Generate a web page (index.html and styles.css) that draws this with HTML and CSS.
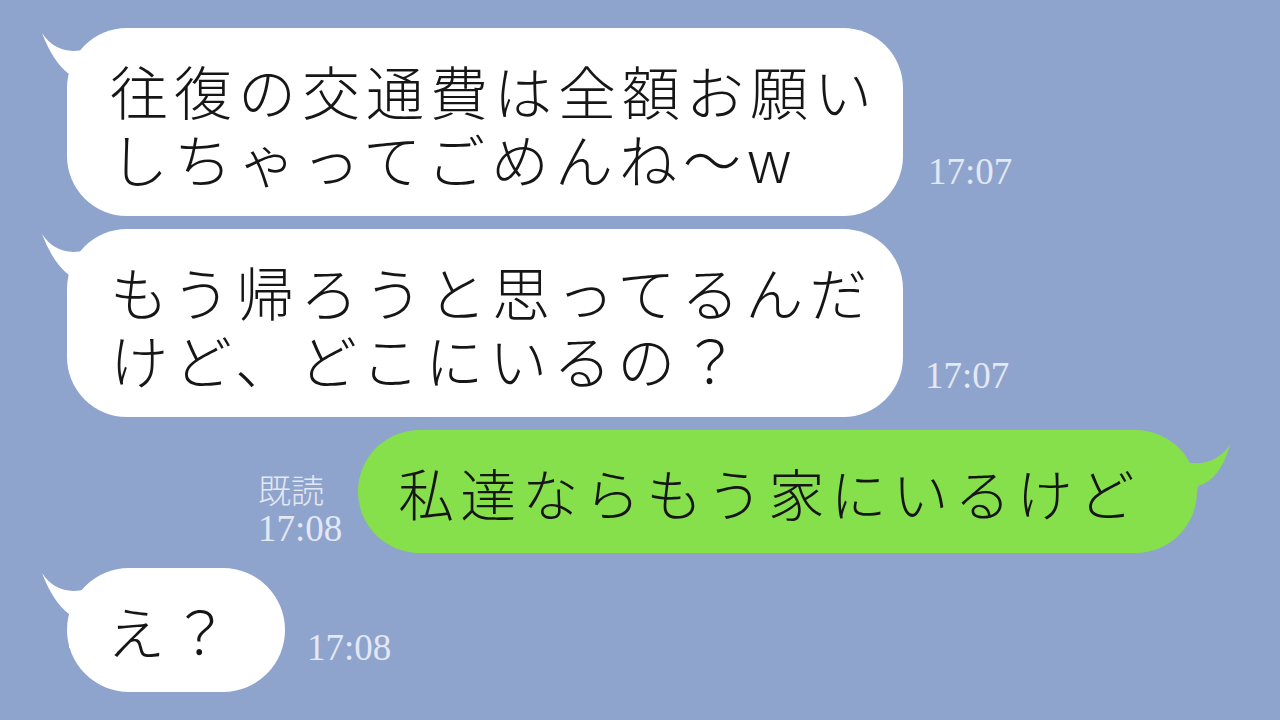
FILE: index.html
```html
<!DOCTYPE html>
<html lang="ja">
<head>
    <meta charset="UTF-8">
    <meta name="viewport" content="width=device-width, initial-scale=1.0">
    <title>トーク</title>
    <link rel="stylesheet" href="styles.css">
</head>
<body>
    <div class="chat">
        <!-- 相手のメッセージ -->
        <div class="row">
            <div class="bubble bubble-in bubble-big">
                <svg class="tail tail-in" width="70" height="80" viewBox="0 0 70 80"><path d="M3,5 Q22,34 62,16 L62,80 L30,80 L30,46 Q14,34 3,5 Z"/></svg>
                <p>往復の交通費は全額お願い<br>しちゃってごめんね～w</p>
            </div>
            <span class="time t1">17:07</span>
        </div>

        <div class="row">
            <div class="bubble bubble-in bubble-big">
                <svg class="tail tail-in" width="70" height="80" viewBox="0 0 70 80"><path d="M3,5 Q22,34 62,16 L62,80 L30,80 L30,46 Q14,34 3,5 Z"/></svg>
                <p>もう帰ろうと思ってるんだ<br>けど、どこにいるの？</p>
            </div>
            <span class="time t2">17:07</span>
        </div>

        <!-- 自分のメッセージ -->
        <div class="row row-out">
            <div class="meta">
                <span>既読</span>
                <span class="meta-time">17:08</span>
            </div>
            <div class="bubble bubble-out">
                <svg class="tail tail-out" width="70" height="80" viewBox="0 0 70 80"><path d="M67,15 Q50,38 22,32 L6,32 L6,62 L34,62 L35,56 Q57,50 67,15 Z"/></svg>
                <p>私達ならもう家にいるけど</p>
            </div>
        </div>

        <div class="row row-last">
            <div class="bubble bubble-in bubble-small">
                <svg class="tail tail-in" width="70" height="80" viewBox="0 0 70 80"><path d="M3,5 Q22,34 62,16 L62,80 L30,80 L30,46 Q14,34 3,5 Z"/></svg>
                <p>え？</p>
            </div>
            <span class="time t4">17:08</span>
        </div>
    </div>
</body>
</html>
```

FILE: styles.css
```css
body {
    margin: 0;
    width: 1280px;
    height: 720px;
    overflow: hidden;
    background-color: #8fa4cc;
    font-family: "Noto Sans CJK JP", "Noto Sans", sans-serif;
}

.chat {
    display: flex;
    flex-direction: column;
    gap: 13px;
    padding: 28px 0 0 67px;
}

.row {
    display: flex;
    align-items: flex-end;
}

.row-last {
    margin-top: 2px;
}

.bubble {
    position: relative;
    background-color: #fff;
    border-radius: 60px;
}

.bubble p {
    position: relative;
    margin: 0;
    font-size: 58px;
    font-weight: 300;
    line-height: 68px;
    letter-spacing: 6px;
    color: #161616;
    white-space: nowrap;
}

.bubble-in {
    padding: 28px 25px 24px 43px;
}

.bubble-big {
    width: 836px;
    box-sizing: border-box;
}

.bubble-out {
    background-color: #86e04c;
    padding: 28px 56px 27px 40px;
    border-radius: 62px;
    margin-left: 16px;
}

.bubble-out p {
    font-size: 56px;
    letter-spacing: 6px;
}

.bubble-small {
    padding: 28px 50px 28px 40px;
    border-radius: 62px;
}

/* colas de los globos */
.tail {
    position: absolute;
    top: 0;
}

.tail-in {
    left: -28px;
    fill: #fff;
}

.tail-out {
    right: -36px;
    fill: #86e04c;
}

.time {
    font-family: "Liberation Serif", serif;
    font-size: 37px;
    line-height: 37px;
    color: #e2e8f4;
    margin-left: 25px;
}

.t1 {
    margin-bottom: 26px;
}

.t2 {
    margin-left: 22px;
    margin-bottom: 23px;
}

.t4 {
    margin-left: 22px;
    margin-bottom: 26px;
}

.row-out {
    margin-left: 191px;
}

.meta {
    display: flex;
    flex-direction: column;
    color: #e2e8f4;
    margin-bottom: 4px;
}

.meta span {
    font-size: 33px;
    font-weight: 300;
    line-height: 40px;
}

.meta-time {
    font-family: "Liberation Serif", serif;
    font-size: 37px !important;
}
```
